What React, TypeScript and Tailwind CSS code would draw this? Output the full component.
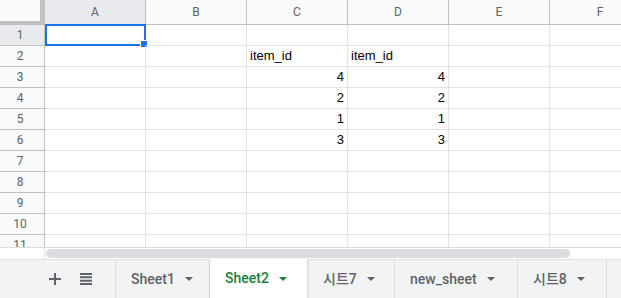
import React from 'react'

const cols = ['A', 'B', 'C', 'D', 'E', 'F']
const rows = [1, 2, 3, 4, 5, 6, 7, 8, 9, 10, 11]

const cellData: Record<string, { v: string; num?: boolean }> = {
  C2: { v: 'item_id' },
  D2: { v: 'item_id' },
  C3: { v: '4', num: true },
  D3: { v: '4', num: true },
  C4: { v: '2', num: true },
  D4: { v: '2', num: true },
  C5: { v: '1', num: true },
  D5: { v: '1', num: true },
  C6: { v: '3', num: true },
  D6: { v: '3', num: true },
}

const tabs = [
  { name: 'Sheet1', w: 'w-[94px]' },
  { name: 'Sheet2', w: 'w-[98px]', active: true },
  { name: '시트7', w: 'w-[87px]' },
  { name: 'new_sheet', w: 'w-[123px]' },
  { name: '시트8', w: 'w-[89px]' },
]

function Caret({ color }: { color: string }) {
  return (
    <svg width="8" height="4" viewBox="0 0 8 4" className="ml-[10px] shrink-0">
      <path d="M0 0h8L4 4z" fill={color} />
    </svg>
  )
}

export default function App() {
  return (
    <div className="w-[621px] h-[298px] overflow-hidden bg-white flex flex-col font-['Liberation_Sans',Arial,sans-serif]">
      {/* grid */}
      <div className="h-[247px] overflow-hidden">
        {/* column headers */}
        <div className="flex h-[25px]">
          <div className="w-[45px] shrink-0 flex flex-col border-r border-[#c0c0c0]">
            <div className="flex h-[21px]">
              <div className="w-[40px] bg-[#f8f9fa]" />
              <div className="w-[4px] bg-[#c0c0c0]" />
            </div>
            <div className="h-[4px] bg-[#c0c0c0]" />
          </div>
          {cols.map((c, i) => (
            <div
              key={c}
              className={`w-[101px] shrink-0 h-[25px] border-r border-b border-[#c0c0c0] flex items-center justify-center text-[12px] text-[#5f6368] font-['Roboto',sans-serif] ${i === 0 ? 'bg-[#e8eaed] text-[#3c4043]' : 'bg-[#f8f9fa]'}`}
            >
              {c}
            </div>
          ))}
        </div>
        {rows.map((r) => (
          <div key={r} className="flex h-[21px]">
            <div
              className={`w-[45px] shrink-0 border-r border-b border-[#c0c0c0] flex items-center justify-center pr-[4px] text-[12px] text-[#5f6368] font-['Roboto',sans-serif] ${r === 1 ? 'bg-[#e8eaed] text-[#3c4043]' : 'bg-[#f8f9fa]'}`}
            >
              {r}
            </div>
            {cols.map((c) => {
              const d = cellData[`${c}${r}`]
              const selected = c === 'A' && r === 1
              return (
                <div
                  key={c}
                  className={`relative w-[101px] shrink-0 border-r border-b border-[#e2e3e3] flex items-center px-[3px] text-[13px] text-black ${d?.num ? 'justify-end' : 'justify-start'}`}
                >
                  {d?.v}
                  {selected && (
                    <>
                      <div className="absolute left-0 top-[-1px] w-[101px] h-[22px] border-2 border-[#1a73e8]" />
                      <div className="absolute right-[-3px] bottom-[-3px] w-[6px] h-[6px] bg-[#1a73e8] border border-white box-content" />
                    </>
                  )}
                </div>
              )
            })}
          </div>
        ))}
      </div>
      {/* scrollbar row */}
      <div className="h-[12px] flex border-t border-[#dadce0] bg-white">
        <div className="w-[45px] shrink-0 border-r border-[#e2e3e3]" />
        <div className="flex items-center pl-[1px]">
          <div className="w-[524px] h-[9px] rounded-full bg-[#dadce0]" />
        </div>
      </div>
      {/* tab bar */}
      <div className="flex-1 flex bg-[#f1f3f4] border-t border-[#e0e0e0] font-['Roboto',sans-serif]">
        <div className="w-[116px] shrink-0 flex items-center border-r border-[#dadce0]">
          <svg width="12" height="12" viewBox="0 0 12 12" className="ml-[49px]">
            <path d="M5 0h2v5h5v2H7v5H5V7H0V5h5z" fill="#5f6368" />
          </svg>
          <svg width="12" height="12" viewBox="0 0 12 12" className="ml-[19px]">
            <path d="M0 0h12v2H0zM0 3.3h12v2H0zM0 6.7h12v2H0zM0 10h12v2H0z" fill="#5f6368" />
          </svg>
        </div>
        {tabs.map((t) => (
          <div
            key={t.name}
            className={`${t.w} shrink-0 flex items-center pl-[15px] text-[14px] border-r border-[#dadce0] ${t.active ? 'bg-white text-[#188038] font-medium -mt-px shadow-[0_1px_3px_rgba(60,64,67,0.15)]' : 'text-[#5f6368] font-medium'}`}
          >
            <span className="font-['Roboto','Noto_Sans_CJK_KR',sans-serif]">{t.name}</span>
            <Caret color={t.active ? '#188038' : '#5f6368'} />
          </div>
        ))}
      </div>
    </div>
  )
}
